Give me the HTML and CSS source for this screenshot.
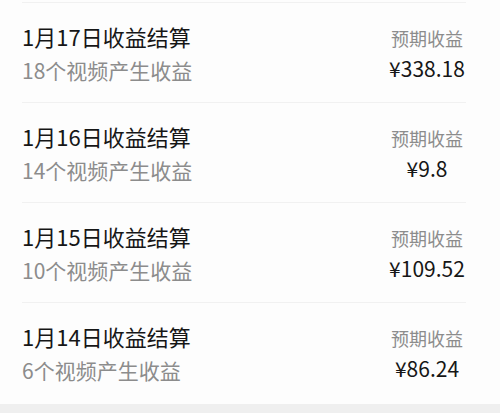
FILE: index.html
```html
<!DOCTYPE html>
<html lang="zh-CN">
<head>
    <meta charset="UTF-8">
    <meta name="viewport" content="width=device-width, initial-scale=1.0">
    <title>收益结算</title>
    <link rel="stylesheet" href="styles.css">
</head>
<body>
    <div class="list">
        <div class="row">
            <div class="info">
                <div class="title">1月17日收益结算</div>
                <div class="sub">18个视频产生收益</div>
            </div>
            <div class="money">
                <div class="label">预期收益</div>
                <div class="amount">¥338.18</div>
            </div>
        </div>
        <div class="row">
            <div class="info">
                <div class="title">1月16日收益结算</div>
                <div class="sub">14个视频产生收益</div>
            </div>
            <div class="money">
                <div class="label">预期收益</div>
                <div class="amount">¥9.8</div>
            </div>
        </div>
        <div class="row">
            <div class="info">
                <div class="title">1月15日收益结算</div>
                <div class="sub">10个视频产生收益</div>
            </div>
            <div class="money">
                <div class="label">预期收益</div>
                <div class="amount">¥109.52</div>
            </div>
        </div>
        <div class="row">
            <div class="info">
                <div class="title">1月14日收益结算</div>
                <div class="sub">6个视频产生收益</div>
            </div>
            <div class="money">
                <div class="label">预期收益</div>
                <div class="amount">¥86.24</div>
            </div>
        </div>
    </div>
</body>
</html>
```

FILE: styles.css
```css
body {
    margin: 0;
    background: #efefef;
    font-family: "Noto Sans CJK SC", "Noto Sans", sans-serif;
    height: 413px;
    overflow: hidden;
}
.list {
    background: #fdfdfd;
    padding: 2px 34px 2px 22px;
}
.row {
    height: 99px;
    border-top: 1px solid #f1f1f1;
    display: flex;
    justify-content: space-between;
    align-items: center;
}
.title {
    font-size: 22px;
    line-height: 34px;
    color: #161616;
}
.sub {
    font-size: 21px;
    line-height: 34px;
    color: #8c8c8c;
}
.money {
    text-align: center;
    width: 78px;
}
.label {
    font-size: 18px;
    line-height: 30px;
    color: #8c8c8c;
}
.amount {
    font-size: 21px;
    line-height: 30px;
    color: #161616;
}
```
